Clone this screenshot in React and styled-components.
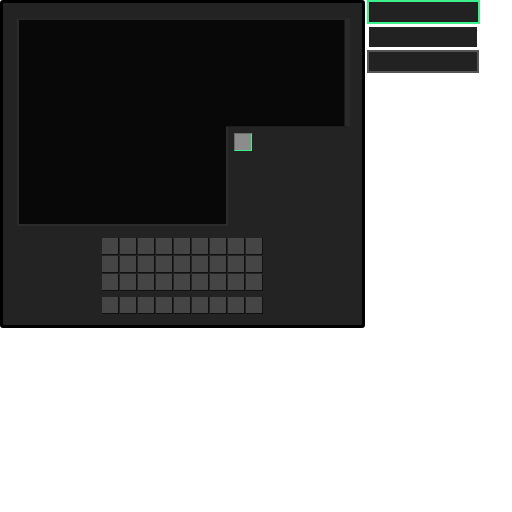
import styled, { createGlobalStyle } from 'styled-components';

const GlobalStyle = createGlobalStyle`
  body {
    margin: 0;
    background: #fff;
    font-family: "Liberation Sans", Arial, sans-serif;
  }
`;

const Page = styled.div`
  display: flex;
  flex-direction: row;
  align-items: flex-start;
`;

const Panel = styled.div`
  box-sizing: border-box;
  width: 365px;
  height: 328px;
  background: #232323;
  border: 3px solid #000;
  border-radius: 3px;
  display: flex;
  flex-direction: column;
  padding-top: 15px;
`;

const ScreenGrid = styled.div`
  display: grid;
  grid-template-columns: 211px 122px;
  grid-template-rows: 109px 99px;
  align-self: flex-start;
  margin-left: 14px;
`;

const Screen = styled.div`
  box-sizing: border-box;
  background: #080808;
  border: 2px solid #2b2b2b;
  border-top-color: #262626;
  grid-column: 1;
  grid-row: 1 / 3;
`;

const ScreenSide = styled.div`
  box-sizing: border-box;
  grid-column: 2;
  grid-row: 1;
  margin-left: -2px;
  z-index: 1;
  background: #080808;
  border-top: 2px solid #262626;
  border-bottom: 1px solid #1c1c1c;
  border-right: 5px solid #2a2a2a;
  box-shadow: inset -1px 0 0 #1a1a1a;
`;

const Dock = styled.div`
  grid-column: 2;
  grid-row: 2;
  padding: 6px;
`;

const Swatch = styled.div`
  box-sizing: border-box;
  width: 18px;
  height: 18px;
  background: #8c8c8c;
  border: 1px solid #6a6a6a;
  border-right-color: #3cf08a;
  border-bottom-color: #3cf08a;
`;

const Keypad = styled.div`
  display: grid;
  grid-template-columns: repeat(9, 17px);
  grid-template-rows: 17px 17px 17px 22px;
  gap: 1px;
  margin-top: 12px;
  align-self: center;
`;

const Key = styled.div`
  box-sizing: border-box;
  height: 17px;
  align-self: ${(p) => (p.$spaced ? 'end' : 'start')};
  background: #454545;
  border-right: 1px solid #111;
  border-bottom: 1px solid #111;
`;

const Side = styled.div`
  display: flex;
  flex-direction: column;
  gap: 3px;
  margin-left: 2px;
`;

const SideButton = styled.div`
  box-sizing: border-box;
  width: ${(p) => p.$w}px;
  height: ${(p) => p.$h}px;
  margin-left: ${(p) => p.$inset}px;
  background: #222;
  border: ${(p) => (p.$edge ? `2px solid ${p.$edge}` : 'none')};
`;

const keys = Array.from({ length: 36 }, (_, i) => i);

const App = () => (
  <Page>
    <GlobalStyle />
    <Panel>
      <ScreenGrid>
        <Screen />
        <ScreenSide />
        <Dock>
          <Swatch />
        </Dock>
      </ScreenGrid>
      <Keypad>
        {keys.map((k) => (
          <Key key={k} $spaced={k >= 27} />
        ))}
      </Keypad>
    </Panel>
    <Side>
      <SideButton $w={113} $h={24} $inset={0} $edge="#3cf08a" />
      <SideButton $w={108} $h={20} $inset={2} />
      <SideButton $w={112} $h={23} $inset={0} $edge="#555" />
    </Side>
  </Page>
);

export default App;
